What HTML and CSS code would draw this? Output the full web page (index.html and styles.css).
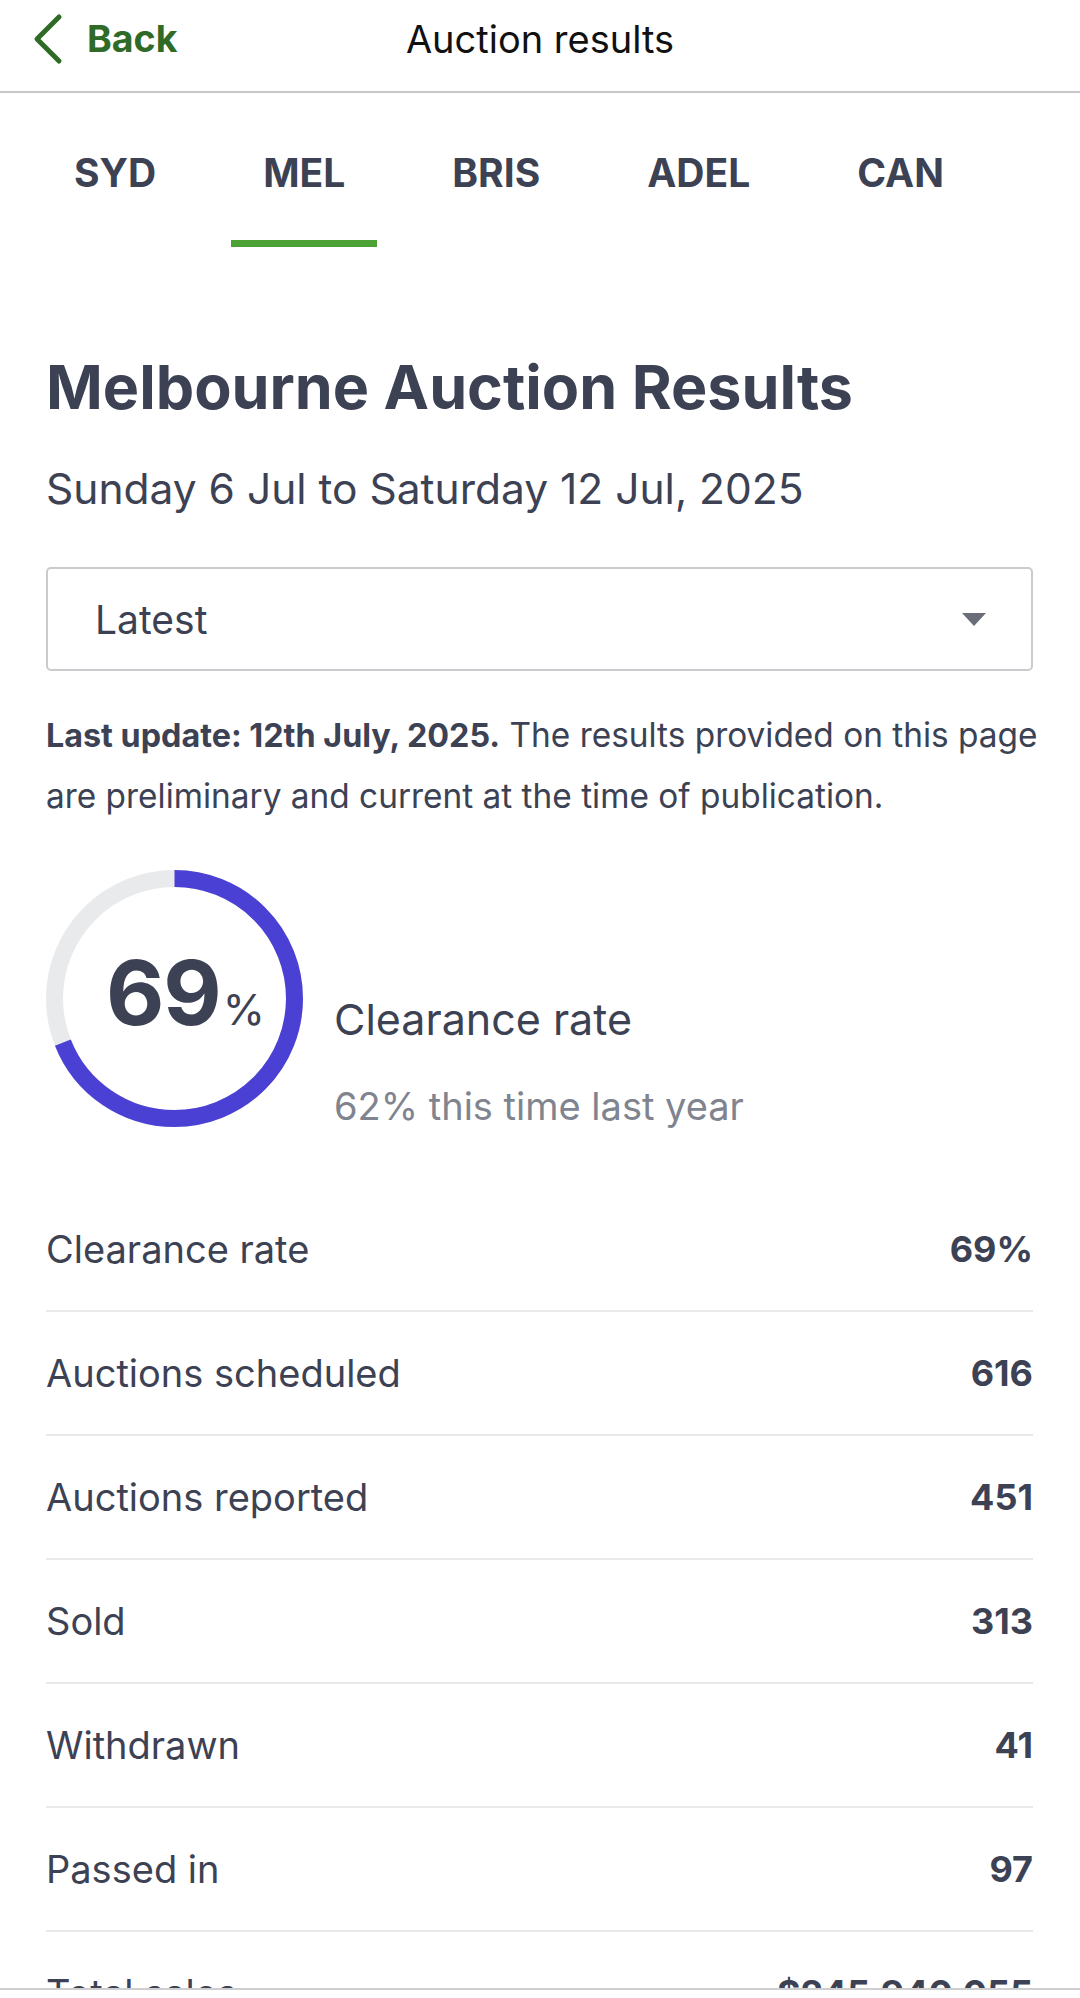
FILE: index.html
```html
<!DOCTYPE html>
<html lang="en">
<head>
<meta charset="utf-8">
<title>Auction results</title>
<link rel="stylesheet" href="styles.css">
</head>
<body>
<header class="topbar">
  <a class="back" href="#">
    <svg class="chev" width="34" height="52" viewBox="0 0 34 52" aria-hidden="true"><path d="M28 4 L6 26 L28 48" fill="none" stroke="#2f6b27" stroke-width="5" stroke-linecap="round" stroke-linejoin="round"/></svg>
    <span>Back</span>
  </a>
  <h1 class="title">Auction results</h1>
  <div></div>
</header>

<nav class="tabs">
  <a class="tab" href="#">SYD</a>
  <a class="tab active" href="#">MEL</a>
  <a class="tab" href="#">BRIS</a>
  <a class="tab" href="#">ADEL</a>
  <a class="tab" href="#">CAN</a>
</nav>

<main class="content">
  <h2 class="heading">Melbourne Auction Results</h2>
  <p class="dates">Sunday 6 Jul to Saturday 12 Jul, 2025</p>

  <div class="select">
    <span>Latest</span>
    <span class="caret"></span>
  </div>

  <p class="note"><strong>Last update: 12th July, 2025.</strong> The results provided on this page are preliminary and current at the time of publication.</p>

  <section class="summary">
    <div class="ring">
      <svg width="257" height="257" viewBox="0 0 257 257" aria-hidden="true">
        <circle cx="128.5" cy="128.5" r="120" fill="none" stroke="#e9eaec" stroke-width="17"/>
        <circle cx="128.5" cy="128.5" r="120" fill="none" stroke="#4b40d4" stroke-width="17" stroke-dasharray="520.2 753.98" transform="rotate(-90 128.5 128.5)"/>
      </svg>
      <div class="ring-value"><span class="num">69</span><span class="pct">%</span></div>
    </div>
    <div class="summary-text">
      <div class="summary-label">Clearance rate</div>
      <div class="summary-sub">62% this time last year</div>
    </div>
  </section>

  <ul class="rows">
    <li class="row"><span>Clearance rate</span><b>69%</b></li>
    <li class="row"><span>Auctions scheduled</span><b>616</b></li>
    <li class="row"><span>Auctions reported</span><b>451</b></li>
    <li class="row"><span>Sold</span><b>313</b></li>
    <li class="row"><span>Withdrawn</span><b>41</b></li>
    <li class="row"><span>Passed in</span><b>97</b></li>
    <li class="row"><span>Total sales</span><b>$245,940,055</b></li>
  </ul>
</main>

<div class="bottombar"></div>
</body>
</html>
```
FILE: styles.css
```css
* { box-sizing: border-box; }
html, body { margin: 0; padding: 0; background: #fff; }
body {
  font-family: "Inter", "Noto Sans", sans-serif;
  color: #3c4253;
  width: 1080px;
  overflow: hidden;
}
a { text-decoration: none; color: inherit; }

.topbar {
  height: 93px;
  border-bottom: 2px solid #c8c8cb;
  display: grid;
  grid-template-columns: 1fr auto 1fr;
  align-items: center;
  padding-bottom: 13px;
}
.back {
  display: flex;
  align-items: center;
  gap: 22px;
  padding-left: 31px;
  color: #2f6b27;
  font-weight: 700;
  font-size: 37.5px;
  line-height: 46px;
}
.chev { display: block; }
.title {
  margin: 0;
  font-size: 38px;
  font-weight: 400;
  line-height: 46px;
  color: #111;
}

.tabs {
  display: flex;
  gap: 43px;
  padding-left: 42px;
}
.tab {
  padding: 57px 32px 44px;
  font-size: 39px;
  font-weight: 700;
  line-height: 46px;
  color: #3c4253;
  border-bottom: 7px solid transparent;
}
.tab.active { border-bottom-color: #4ca235; }

.content { padding: 0 47px 0 46px; }

.heading {
  margin: 106px 0 0;
  font-size: 61px;
  line-height: 68px;
  font-weight: 700;
}
.dates {
  margin: 42px 0 0;
  font-size: 42.5px;
  line-height: 52px;
}

.select {
  margin-top: 52px;
  height: 104px;
  border: 2px solid #cacbce;
  border-radius: 5px;
  display: flex;
  align-items: center;
  justify-content: space-between;
  padding: 0 45px 0 47px;
  font-size: 39px;
}
.caret {
  width: 0; height: 0;
  border-left: 12.5px solid transparent;
  border-right: 12.5px solid transparent;
  border-top: 13px solid #6b6e78;
}

.note {
  margin: 34px -14px 0 0;
  font-size: 33.4px;
  line-height: 60px;
}
.note strong { font-weight: 700; font-size: 32.3px; }

.summary {
  margin-top: 44px;
  display: flex;
  align-items: flex-start;
  gap: 31px;
}
.ring {
  position: relative;
  width: 257px;
  height: 257px;
  flex: none;
}
.ring svg { display: block; }
.ring-value {
  position: absolute;
  inset: 0;
  display: flex;
  align-items: baseline;
  justify-content: center;
  padding: 78px 0 0 22px;
  line-height: 1;
}
.num { font-size: 90px; font-weight: 700; letter-spacing: -1px; }
.pct { font-size: 43px; margin-left: 2px; }
.summary-text { padding-top: 123px; }
.summary-label { font-size: 43px; line-height: 52px; }
.summary-sub { margin-top: 37px; font-size: 38px; line-height: 48px; color: #80848f; }

.rows {
  list-style: none;
  margin: 58px 0 0;
  padding: 0;
}
.row {
  display: flex;
  justify-content: space-between;
  align-items: center;
  padding: 35px 0;
  line-height: 52px;
  font-size: 38px;
  border-bottom: 2px solid #e8e9eb;
}
.row b { font-size: 36px; font-weight: 700; }

.bottombar {
  position: fixed;
  left: 0; right: 0; bottom: 0;
  height: 10px;
  background: #fff;
  border-top: 2px solid #cfcfd2;
}
```
